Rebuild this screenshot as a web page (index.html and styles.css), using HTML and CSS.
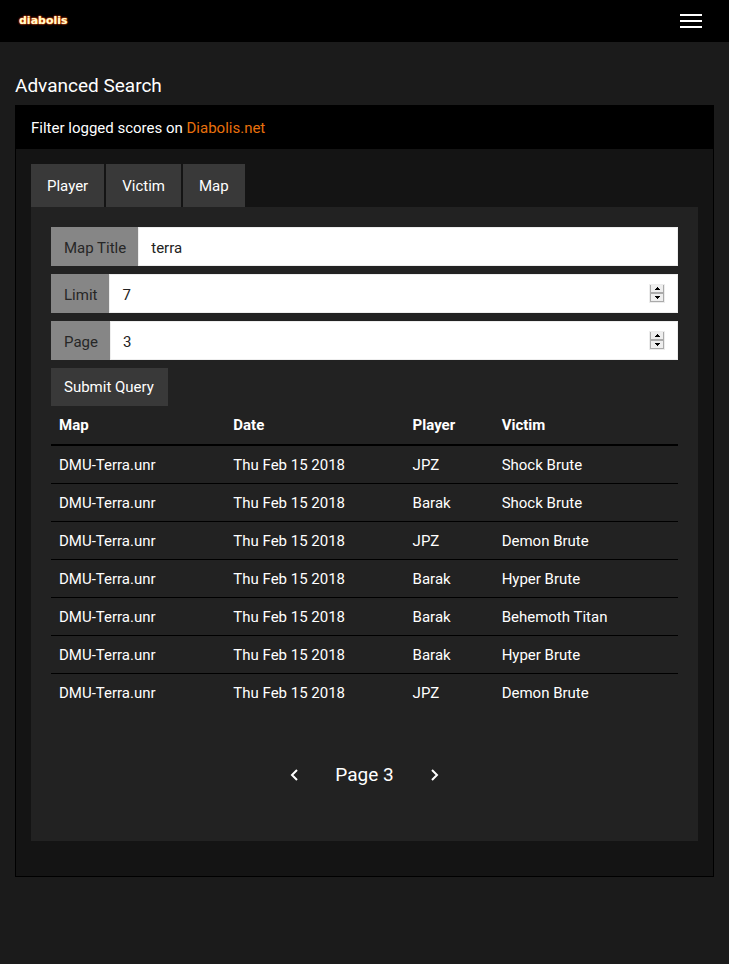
FILE: index.html
```html
<!DOCTYPE html>
<html lang="en">
<head>
<meta charset="utf-8">
<meta name="viewport" content="width=device-width, initial-scale=1">
<title>Diabolis - Advanced Search</title>
<link rel="stylesheet" href="styles.css">
</head>
<body>
<header class="navbar">
  <a class="brand" href="#">diabolis</a>
  <button class="menu" type="button" aria-label="Menu">
    <svg width="22" height="14" viewBox="0 0 22 14"><path d="M0 1h22M0 7h22M0 13h22" stroke="#fff" stroke-width="2"/></svg>
  </button>
</header>
<main class="container">
  <h1 class="title">Advanced Search</h1>
  <section class="card">
    <div class="card-header">Filter logged scores on <a href="#">Diabolis.net</a></div>
    <div class="card-body">
      <nav class="tabs">
        <a href="#">Player</a>
        <a href="#">Victim</a>
        <a href="#">Map</a>
      </nav>
      <div class="panel">
        <form class="search">
          <div class="group">
            <label for="map">Map Title</label>
            <div class="field"><input id="map" type="text" value="terra"></div>
          </div>
          <div class="group">
            <label for="limit">Limit</label>
            <div class="field">
              <input id="limit" type="number" value="7">
              <span class="spinner">
                <button type="button" aria-label="Increase limit"><svg width="5" height="3" viewBox="0 0 5 3"><path d="M2 0h1v1h1v1h1v1H0V2h1V1h1z"/></svg></button>
                <button type="button" aria-label="Decrease limit"><svg width="5" height="3" viewBox="0 0 5 3"><path d="M0 0h5v1H4v1H3v1H2V2H1V1H0z"/></svg></button>
              </span>
            </div>
          </div>
          <div class="group">
            <label for="page">Page</label>
            <div class="field">
              <input id="page" type="number" value="3">
              <span class="spinner">
                <button type="button" aria-label="Increase page"><svg width="5" height="3" viewBox="0 0 5 3"><path d="M2 0h1v1h1v1h1v1H0V2h1V1h1z"/></svg></button>
                <button type="button" aria-label="Decrease page"><svg width="5" height="3" viewBox="0 0 5 3"><path d="M0 0h5v1H4v1H3v1H2V2H1V1H0z"/></svg></button>
              </span>
            </div>
          </div>
          <button class="submit" type="submit">Submit Query</button>
        </form>
        <table class="scores">
          <colgroup><col class="col-map"><col class="col-date"><col class="col-player"><col></colgroup>
          <thead>
            <tr><th>Map</th><th>Date</th><th>Player</th><th>Victim</th></tr>
          </thead>
          <tbody>
            <tr><td>DMU-Terra.unr</td><td>Thu Feb 15 2018</td><td>JPZ</td><td>Shock Brute</td></tr>
            <tr><td>DMU-Terra.unr</td><td>Thu Feb 15 2018</td><td>Barak</td><td>Shock Brute</td></tr>
            <tr><td>DMU-Terra.unr</td><td>Thu Feb 15 2018</td><td>JPZ</td><td>Demon Brute</td></tr>
            <tr><td>DMU-Terra.unr</td><td>Thu Feb 15 2018</td><td>Barak</td><td>Hyper Brute</td></tr>
            <tr><td>DMU-Terra.unr</td><td>Thu Feb 15 2018</td><td>Barak</td><td>Behemoth Titan</td></tr>
            <tr><td>DMU-Terra.unr</td><td>Thu Feb 15 2018</td><td>Barak</td><td>Hyper Brute</td></tr>
            <tr><td>DMU-Terra.unr</td><td>Thu Feb 15 2018</td><td>JPZ</td><td>Demon Brute</td></tr>
          </tbody>
        </table>
        <nav class="pager">
          <button type="button" aria-label="Previous page"><svg width="8" height="12" viewBox="0 0 8 12"><path d="M7 1L2 6l5 5"/></svg></button>
          <span>Page 3</span>
          <button type="button" aria-label="Next page"><svg width="8" height="12" viewBox="0 0 8 12"><path d="M1 1l5 5-5 5"/></svg></button>
        </nav>
      </div>
    </div>
  </section>
</main>
</body>
</html>
```
FILE: styles.css
```css
* { box-sizing: border-box; }

body {
  margin: 0;
  background: #1b1b1b;
  color: #fff;
  font: 15px/22px Roboto, "Liberation Sans", sans-serif;
}

a { text-decoration: none; }
button, input { font: inherit; }
button { border: 0; padding: 0; background: none; color: inherit; cursor: pointer; }
svg { display: block; }

.navbar {
  display: flex;
  align-items: center;
  justify-content: space-between;
  height: 42px;
  padding: 0 27px 0 19px;
  background: #000;
}

.brand {
  color: #fffbd0;
  font: bold 11px/12px "DejaVu Sans", sans-serif;
  text-shadow: 0 0 1px #ff9a20, 0 0 2px #f04000, 0 0 2px #d02000;
}

.container { padding: 33px 15px; }

.title { margin: 0 0 8px; font-size: 19px; line-height: 22px; font-weight: 400; }

.card { border: 1px solid #000; background: #141414; }
.card-header { padding: 11px 15px 10px; background: #000; }
.card-header a { color: #e8700c; }
.card-body { padding: 15px 15px 35px; }

.tabs { display: flex; gap: 2px; }
.tabs a { padding: 11px 16px 10px; background: #393939; color: #fff; }

.panel { padding: 20px 20px 55px; background: #222; }

.search { display: flex; flex-direction: column; align-items: stretch; gap: 8px; }
.group { display: flex; height: 39px; }
.group label { padding: 10px 12px 7px 13px; background: #868686; color: #272727; }

.field {
  display: flex;
  flex: 1;
  align-items: center;
  padding: 0 12px;
  border: 1px solid #eee;
  background: #fff;
}
.field input {
  flex: 1;
  min-width: 0;
  padding: 2px 0 0;
  border: 0;
  outline: 0;
  background: none;
  color: #222;
  appearance: textfield;
}
.field input::-webkit-inner-spin-button { appearance: none; }

.spinner { display: flex; flex-direction: column; width: 16px; border: 1px solid #ececec; }
.spinner button {
  display: flex;
  align-items: center;
  justify-content: center;
  height: 8px;
  border: 1px solid #aaa;
  border-top: 0;
  background: #eee;
}
.spinner button:first-child { height: 9px; border-bottom-width: 2px; }

.submit { align-self: flex-start; padding: 8px 14px 8px 13px; background: #393939; }

.scores { width: 100%; table-layout: fixed; border-collapse: collapse; }
.col-map { width: 27.8%; }
.col-date { width: 28.6%; }
.col-player { width: 14.2%; }
.scores th, .scores td { padding: 8px; text-align: left; }
.scores td { padding-bottom: 7px; border-top: 1px solid #000; }
.scores thead th { border-bottom: 2px solid #000; }

.pager {
  display: flex;
  align-items: center;
  justify-content: center;
  gap: 37px;
  padding-top: 53px;
  font-size: 19px;
}
.pager path { fill: none; stroke: #fff; stroke-width: 2; }
```
